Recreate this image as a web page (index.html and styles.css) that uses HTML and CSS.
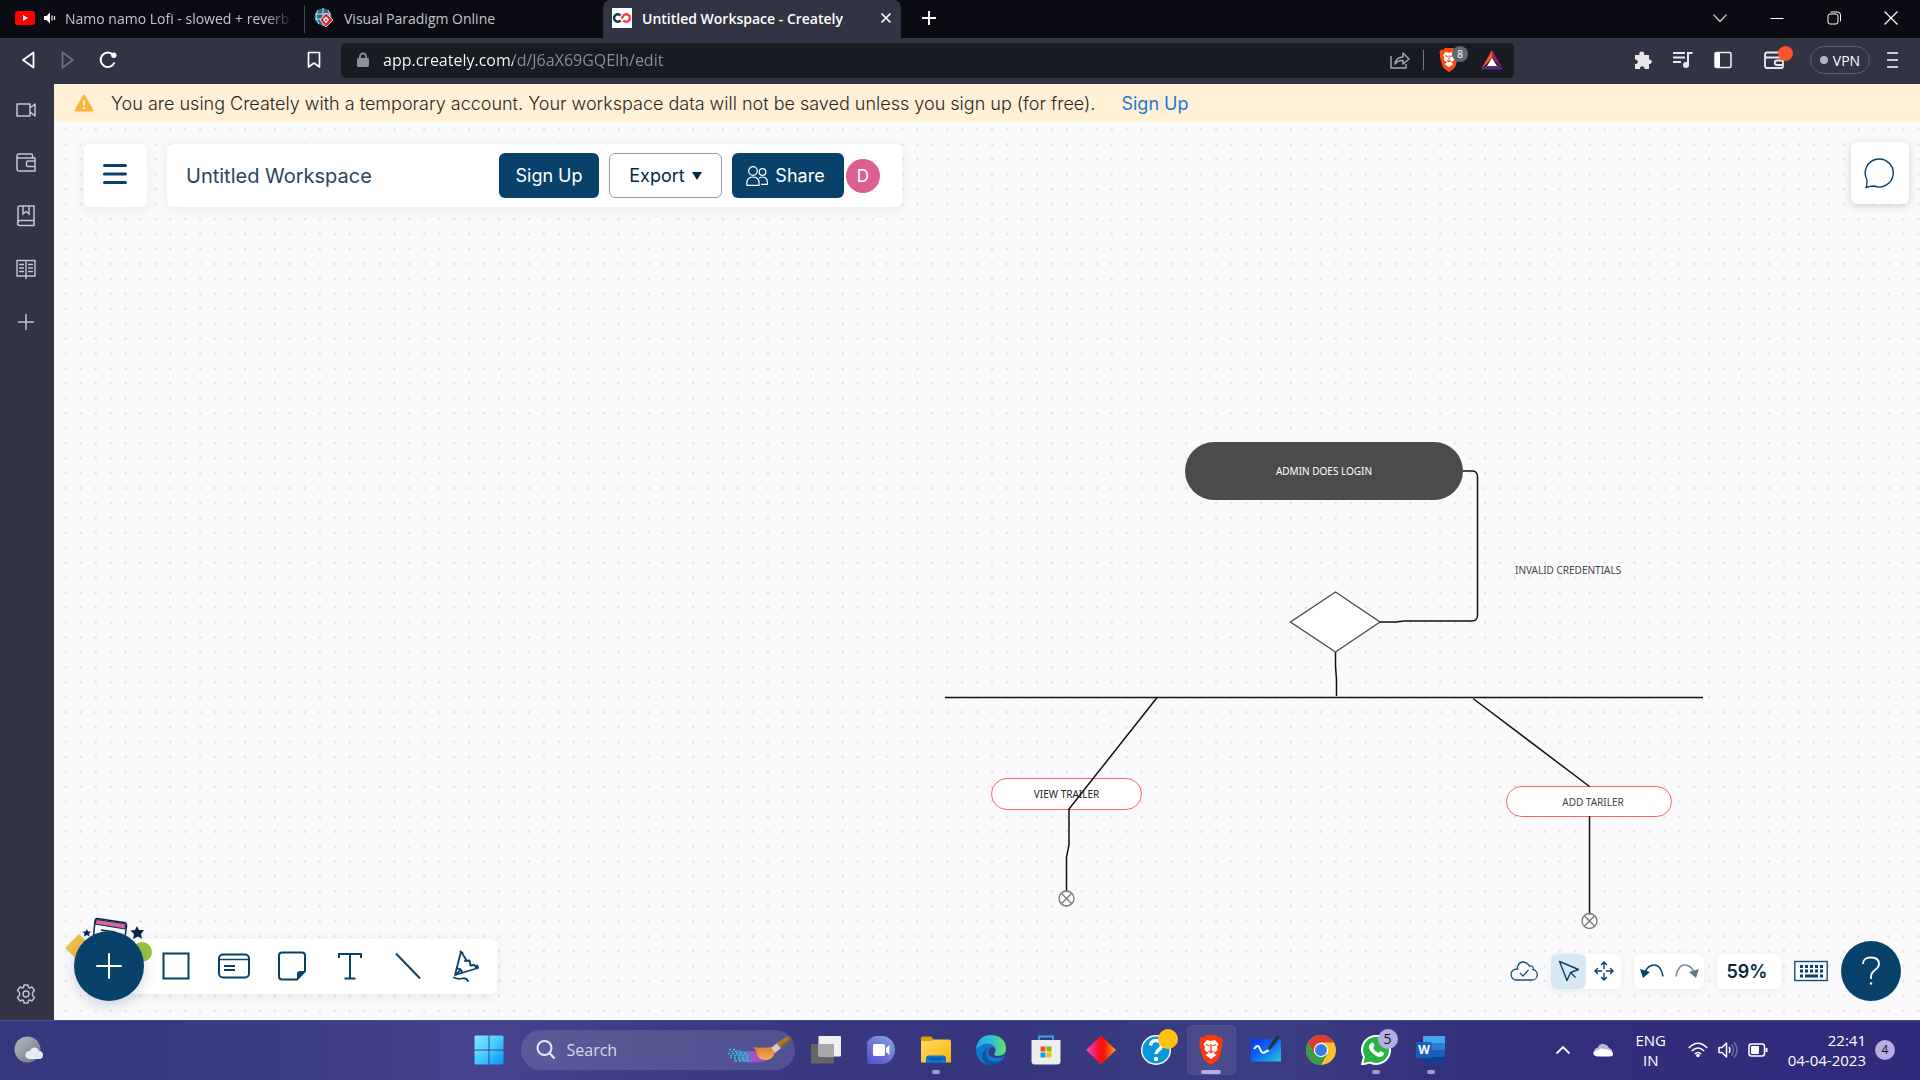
FILE: index.html
```html
<!DOCTYPE html>
<html lang="en">
<head>
<meta charset="utf-8">
<title>Untitled Workspace - Creately</title>
<link rel="stylesheet" href="styles.css">
</head>
<body>
<header class="tabstrip">
  <div class="tab tab-first">
    <svg width="20" height="14" viewBox="0 0 20 14"><rect width="20" height="14" rx="3" fill="#f00"/><path d="M8 4v6l5-3z" fill="#fff"/></svg>
    <svg width="12" height="12" viewBox="0 0 12 12"><path d="M0 4h2.500l3.500-3.500v11L2.500 8H0z" fill="#fff"/><path d="M8 3.500v5M10.500 4v4" stroke="#ddd" stroke-width="1.300" fill="none"/></svg>
    <span class="tab-title tab-fade">Namo namo Lofi - slowed + reverb</span>
  </div>
  <div class="tab tab-second">
    <svg width="20" height="20" viewBox="0 0 20 20"><circle cx="9" cy="9" r="8.500" fill="#2d6f8e"/><path d="M1 6h16M1 11h16M9 0v18M4 2q-4 7 1 14M14 2q4 6 0 13" stroke="#b9dbe8" stroke-width="1" fill="none"/><path d="M12 5l7 7-7 7-6-7z" fill="#d8232f" stroke="#fff" stroke-width=".8"/><path d="M12 8.500l3 3-3 4-3-4z" fill="#fff"/><path d="M12 10.500l1.200 1.500-1.200 1.500-1.200-1.500z" fill="#d8232f"/></svg>
    <span class="tab-title">Visual Paradigm Online</span>
  </div>
  <div class="tab tab-active">
    <svg width="20" height="20" viewBox="0 0 20 20"><rect width="20" height="20" fill="#fff"/><path d="M8.500 7.500A3.700 3.700 0 1 0 8.500 12.500" fill="none" stroke="#12324d" stroke-width="2.400"/><path d="M11.500 12.500A3.700 3.700 0 1 0 11.500 7.500L9.500 10.500" fill="none" stroke="#ef4444" stroke-width="2.400"/></svg>
    <span class="tab-title">Untitled Workspace - Creately</span>
    <button class="icon-btn tab-close" aria-label="Close tab"><svg width="12" height="12" viewBox="0 0 12 12"><path d="M1.500 1.500l9 9M10.500 1.500l-9 9" stroke="#fff" stroke-width="1.700"/></svg></button>
  </div>
  <button class="icon-btn new-tab" aria-label="New tab"><svg width="16" height="16" viewBox="0 0 16 16"><path d="M8 1v14M1 8h14" stroke="#fff" stroke-width="2"/></svg></button>
  <div class="window-controls">
    <button class="icon-btn" aria-label="Search tabs"><svg width="14" height="14" viewBox="0 0 14 14"><path d="M.5 3.500L7 10.500l6.500-7" fill="none" stroke="#ccc" stroke-width="1.200"/></svg></button>
    <button class="icon-btn" aria-label="Minimize"><svg width="14" height="14" viewBox="0 0 14 14"><path d="M.5 7.500h13" stroke="#fff" stroke-width="1"/></svg></button>
    <button class="icon-btn" aria-label="Restore"><svg width="14" height="14" viewBox="0 0 14 14"><rect x="1" y="3" width="10" height="10" rx="2" fill="none" stroke="#fff"/><path d="M3.500 1h7q3 0 3 3v6.500" fill="none" stroke="#fff"/></svg></button>
    <button class="icon-btn" aria-label="Close"><svg width="14" height="14" viewBox="0 0 14 14"><path d="M.5.5l13 13M13.500.5l-13 13" stroke="#fff" stroke-width="1.200"/></svg></button>
  </div>
</header>

<nav class="toolbar">
  <div class="nav-buttons">
    <button class="icon-btn" aria-label="Back"><svg width="14" height="18" viewBox="0 0 14 18"><path d="M12.500 1.500v15L2 9z" fill="none" stroke="#fff" stroke-width="1.800" stroke-linejoin="round"/></svg></button>
    <button class="icon-btn" aria-label="Forward"><svg width="14" height="18" viewBox="0 0 14 18"><path d="M1.500 1.500v15L12 9z" fill="none" stroke="#6c6f7e" stroke-width="1.800" stroke-linejoin="round"/></svg></button>
    <button class="icon-btn" aria-label="Reload"><svg width="18" height="18" viewBox="0 0 18 18"><path d="M15.500 11.500A7.200 7.200 0 1 1 14 3.800" fill="none" stroke="#fff" stroke-width="2"/><circle cx="14.800" cy="4.200" r="2.700" fill="#fff"/></svg></button>
    <button class="icon-btn bookmark" aria-label="Bookmark this page"><svg width="14" height="18" viewBox="0 0 14 18"><path d="M1.500 1.500h11v14.500L7 12l-5.500 4z" fill="none" stroke="#fff" stroke-width="1.700" stroke-linejoin="round"/></svg></button>
  </div>
  <div class="address">
    <svg width="12" height="16" viewBox="0 0 12 16"><rect x="0" y="6" width="12" height="9" rx="1.500" fill="#8e9099"/><path d="M3 7V4.500a3 3 0 0 1 6 0V7" fill="none" stroke="#8e9099" stroke-width="1.800"/></svg>
    <input class="address-input" aria-label="Address" value="app.creately.com/d/J6aX69GQElh/edit">
    <button class="icon-btn share-page" aria-label="Share page"><svg width="20" height="18" viewBox="0 0 20 18"><path d="M1 5v12h15v-4M5 13q1-7 8-7V2l6 6-6 5V9.500q-5-.5-8 3.500z" fill="none" stroke="#a9abb2" stroke-width="1.400" stroke-linejoin="round"/></svg></button>
    <span class="address-rule"></span>
    <button class="icon-btn shield" aria-label="Brave Shields"><svg width="20" height="24" viewBox="0 0 24 30"><path d="M7 0h10l2.500 2.500 2.500-.5 2 4-1 2 .5 3-3.500 12q-.5 1.500-3 3.500l-5 3.500-5-3.500q-2.500-2-3-3.500L.5 11 1 8 0 6l2-4 2.500.5z" fill="#fb4a12"/><path d="M12 6l4-1 3.500 4-1.500 3 .5 3-4 3 3 2-5.500 4-5.500-4 3-2-4-3 .5-3L4.500 9 8 5z" fill="#fff"/><path d="M7 9.500l3.500 1.500M17 9.500L13.500 11M12 9v8M9.500 16l2.500 1.500 2.500-1.500" stroke="#fb4a12" stroke-width="1.300" fill="none"/></svg><span class="shield-count">8</span></button>
    <button class="icon-btn rewards" aria-label="Rewards"><svg width="22" height="20" viewBox="0 0 22 20"><path d="M11 0L0 19.500 11 8z" fill="#fb5a2b"/><path d="M11 0l11 19.500L11 8z" fill="#a01f66"/><path d="M0 19.500h22L16 15H6z" fill="#5b2b82"/><path d="M11 8l5 8H6z" fill="#fff"/></svg></button>
  </div>
  <div class="extensions">
    <button class="icon-btn" aria-label="Extensions"><svg width="20" height="20" viewBox="0 0 20 20"><path d="M2 5h4.500a2.500 2.500 0 1 1 4.500 0H16v4.500a2.300 2.300 0 1 1 0 4.500v5h-4.500a2.300 2.300 0 1 0-4.500 0H2v-5a2.300 2.300 0 1 0 0-4.500z" fill="#e9e9ed"/></svg></button>
    <button class="icon-btn" aria-label="Media control"><svg width="20" height="18" viewBox="0 0 20 18"><path d="M0 2h12M0 6.500h12M0 11h8M15 14V2h4.500" fill="none" stroke="#e9e9ed" stroke-width="2"/><circle cx="13" cy="14" r="3" fill="#e9e9ed"/></svg></button>
    <button class="icon-btn" aria-label="Sidebar"><svg width="18" height="18" viewBox="0 0 18 18"><rect x="1" y="1.500" width="16" height="15" rx="1.500" fill="none" stroke="#e9e9ed" stroke-width="1.600"/><rect x="1" y="1.500" width="5" height="15" fill="#fff"/></svg></button>
    <button class="icon-btn wallet" aria-label="Wallet"><svg width="20" height="18" viewBox="0 0 20 18"><path d="M1 3.500V15q0 2 2 2h14q2 0 2-2V6.500H3q-2 0-2-2.500T3 1.500h13V6M19 9.500h-6a2.200 2.200 0 0 0 0 4.500h6" fill="none" stroke="#e9e9ed" stroke-width="1.800"/></svg><span class="wallet-dot"></span></button>
    <button class="vpn"><span class="vpn-dot"></span>VPN</button>
    <button class="icon-btn" aria-label="Menu"><svg width="12" height="18" viewBox="0 0 12 18"><path d="M0 2h11M0 9h11M0 16h11" stroke="#fff" stroke-width="1.600"/></svg></button>
  </div>
</nav>

<div class="browser-body">
  <aside class="sidebar">
    <button class="icon-btn" aria-label="Talk"><svg width="20" height="20" viewBox="0 0 20 20"><path d="M1 4h13v12H1zM14 8l5-4v12l-5-4" fill="none" stroke="#c3c4d0" stroke-width="1.500" stroke-linejoin="round"/></svg></button>
    <button class="icon-btn" aria-label="Wallet"><svg width="20" height="20" viewBox="0 0 20 20"><path d="M1 3v13q0 2 2 2h16V5H3Q1 5 1 3t2-2h13l1 4M19 8h-7q-1.500 0-1.500 1.500V12q0 1.500 1.500 1.500h7" fill="none" stroke="#c3c4d0" stroke-width="1.500"/></svg></button>
    <button class="icon-btn" aria-label="Bookmarks"><svg width="20" height="22" viewBox="0 0 20 22"><path d="M2 18V3q0-2 2-2h14v14.500H4q-2.500 0-2.500 2.500T4 20.500h14v-5M7 1v8l3-2.500L13 9V1" fill="none" stroke="#c3c4d0" stroke-width="1.500"/></svg></button>
    <button class="icon-btn" aria-label="Reading list"><svg width="20" height="20" viewBox="0 0 20 20"><path d="M1 1.500h18V17H1zM10 1.500V20M3 5.500h5M3 9h5M3 12.500h5M12 5.500h5M12 9h5M12 12.500h5" fill="none" stroke="#c3c4d0" stroke-width="1.400"/></svg></button>
    <button class="icon-btn" aria-label="Add"><svg width="18" height="18" viewBox="0 0 18 18"><path d="M9 1v16M1 9h16" stroke="#c3c4d0" stroke-width="1.500"/></svg></button>
    <button class="icon-btn settings" aria-label="Settings"><svg width="20" height="20" viewBox="0 0 20 20"><path d="M7.500 3.500L8 1h4l.5 2.500 1 .5L16 3l2.500 3.500-2 2v3l2 2L16 17l-2.500-1-1 .5L12 19H8l-.5-2.500-1-.5L4 17l-2.500-3.500 2-2v-3l-2-2L4 3l2.500 1z" fill="none" stroke="#c3c4d0" stroke-width="1.400" stroke-linejoin="round"/><circle cx="10" cy="10" r="3" fill="none" stroke="#c3c4d0" stroke-width="1.400"/></svg></button>
  </aside>

  <main class="page">
    <div class="banner">
      <svg width="20" height="18" viewBox="0 0 20 18"><path d="M10 1.500L18.500 16.500h-17z" fill="#fcb53b" stroke="#fcb53b" stroke-width="2" stroke-linejoin="round"/><path d="M10 6.500v5" stroke="#fff" stroke-width="1.600"/><circle cx="10" cy="14" r="1" fill="#fff"/></svg>
      <span>You are using Creately with a temporary account. Your workspace data will not be saved unless you sign up (for free).</span>
      <a class="banner-link" href="#signup">Sign Up</a>
    </div>

    <section class="workspace">
      <svg class="layer"><defs><pattern id="dots" x="4" y="0" width="14.940" height="14.940" patternUnits="userSpaceOnUse"><circle cx="7.800" cy="7.400" r="1.200" fill="#e1e1e5"/></pattern></defs><rect width="100%" height="100%" fill="url(#dots)"/></svg>

      <div class="node node-admin">ADMIN DOES LOGIN</div>
      <div class="note-invalid">INVALID CREDENTIALS</div>
      <div class="node node-view">VIEW TRAILER</div>
      <div class="node node-add">ADD TARILER</div>
      <svg class="layer">
        <g fill="none" stroke="#111" stroke-width="1.500">
          <path d="M1409 349h9q5 0 5.500 5v140q-.5 5-5.500 5h-68l-8 1h-16"/>
          <path d="M1281.500 530v14l1 14v16"/>
          <path d="M891 575.500h758"/>
          <path d="M1103.500 575L1015 687v36l-2.500 12v34"/>
          <path d="M1419 576.500L1535.500 664.500M1535.500 694v98.500"/>
        </g>
        <path d="M1281.500 470l44.500 30-44.500 30-45-30z" fill="#fff" stroke="#4d4d4d" stroke-width="1.400"/>
        <g fill="none" stroke="#777" stroke-width="1.300">
          <circle cx="1012.500" cy="776.500" r="7.500"/><path d="M1007.500 771.500l10 10M1017.500 771.500l-10 10"/>
          <circle cx="1535.500" cy="799" r="7.500"/><path d="M1530.500 794l10 10M1540.500 794l-10 10"/>
        </g>
      </svg>

      <div class="ui">
        <div class="ui-top">
          <div class="cards">
            <button class="card menu-card" aria-label="Main menu"><svg width="24" height="22" viewBox="0 0 24 22"><path d="M1.500 2.500h21M1.500 11h21M1.500 19.500h21" stroke="#08426a" stroke-width="3" stroke-linecap="round"/></svg></button>
            <div class="card title-card">
              <input class="title-input" aria-label="Workspace name" value="Untitled Workspace">
              <button class="btn btn-solid btn-signup">Sign Up</button>
              <button class="btn btn-outline">Export<svg width="10" height="8" viewBox="0 0 10 8"><path d="M0 0h10L5 8z" fill="#06283f"/></svg></button>
              <button class="btn btn-solid btn-share"><svg width="22" height="20" viewBox="0 0 22 20"><g fill="none" stroke="#fff" stroke-width="1.200"><circle cx="7" cy="5" r="4.300"/><circle cx="16.500" cy="6" r="3.300"/><path d="M1 19.300Q0 11 7 11t6 8.300zM15 18.300h6.300Q22 11 16.500 11q-2 0-3.300 1.200"/></g></svg>Share</button>
              <span class="avatar">D</span>
            </div>
          </div>
          <button class="card chat-card" aria-label="Comments"><svg width="32" height="32" viewBox="0 0 32 32"><path d="M2 30.500q1.500-4 .8-8A14 14 0 1 1 10 29q-4 0-8 1.500z" fill="none" stroke="#08426a" stroke-width="1.400" stroke-linejoin="round"/></svg></button>
        </div>

        <div class="ui-bottom">
          <div class="dock">
            <svg class="dock-art" width="92" height="52" viewBox="0 0 92 52"><path d="M1 31l14-14 14 14-14 14z" fill="#f0bd4c"/><circle cx="78" cy="35" r="10" fill="#93c63d"/><path d="M33 1.500l27 4q3 1 2.500 4L58 40 28 35l3-31q.5-2.500 2-2.500z" fill="#fff" stroke="#062b43" stroke-width="1.500"/><path d="M32.500 2.500l27 4q2 .5 2 2.500l-.5 3L31 7z" fill="#dd63a4" stroke="#062b43"/><path d="M37 13l14 2" stroke="#062b43" stroke-width="1.500"/><path d="M73 9l2 4 5 0-3 4 1 5-4-2.500L69 22l1-5-3.500-3.500 4.500-.5zM23 12l1 2.500h3l-2 2 .5 3-2.500-1.500-3 1.500.5-3-2-2h3z" fill="#062b43"/></svg>
            <button class="dock-add" aria-label="Add"><svg width="26" height="26" viewBox="0 0 26 26"><path d="M13 1v24M1 13h24" stroke="#fff" stroke-width="2" stroke-linecap="round"/></svg></button>
            <div class="dock-tools">
              <button class="icon-btn" aria-label="Shape"><svg width="28" height="28" viewBox="0 0 28 28"><rect x="1.500" y="1.500" width="25" height="25" fill="none" stroke="#08426a" stroke-width="2"/></svg></button>
              <button class="icon-btn" aria-label="Card"><svg width="32" height="26" viewBox="0 0 32 26"><rect x="1" y="1.500" width="30" height="23" rx="4" fill="none" stroke="#08426a" stroke-width="2"/><path d="M1 6.500h30" stroke="#08426a" stroke-width="1.500"/><path d="M6 13h11M6 17h11" stroke="#08426a" stroke-width="2"/></svg></button>
              <button class="icon-btn" aria-label="Sticky note"><svg width="28" height="30" viewBox="0 0 28 30"><path d="M4 1.500h20q3 0 3 3V20l-8 8.500H4q-3 0-3-3v-21q0-3 3-3z" fill="none" stroke="#08426a" stroke-width="2"/><path d="M27 20l-8 8.500V23q0-3 3-3z" fill="#08426a"/></svg></button>
              <button class="icon-btn" aria-label="Text"><svg width="24" height="28" viewBox="0 0 24 28"><path d="M1 6V2h22v4M12 2v24M6.500 26.500h11" fill="none" stroke="#08426a" stroke-width="2"/></svg></button>
              <button class="icon-btn" aria-label="Line"><svg width="26" height="28" viewBox="0 0 26 28"><path d="M1 1.500L25 26.500" stroke="#08426a" stroke-width="2"/></svg></button>
              <button class="icon-btn" aria-label="Draw"><svg width="26" height="32" viewBox="0 0 26 32"><g fill="none" stroke="#08426a" stroke-width="1.800" stroke-linejoin="round" stroke-linecap="round"><path d="M8 1.500L2 25l23-7M7.500 1.500L9.500 3M9 3l4 6.500-1 1.500 4.500-.5 1 5 4-.5 1.500 2.500M25 17.500l-1-2"/><path d="M4 18.500q5 .5 5 4M3 24.500l3.500-3.500"/><path d="M1 27.500q4 2 8 1t6 2.500"/></g></svg></button>
            </div>
          </div>

          <div class="controls">
            <svg width="28" height="20" viewBox="0 0 28 20"><path d="M6 19h16a5.300 5.300 0 0 0 1-10.500Q24 4.500 19.500 5 17 1 13 1T7.500 6q-.5 1 0 2Q1 8 1 13.500 1.500 18.500 6 19z" fill="none" stroke="#1d4d70" stroke-width="1.300"/><path d="M10 12l3 3 5.500-6" fill="none" stroke="#1d4d70" stroke-width="1.300"/></svg>
            <div class="pair">
              <button class="icon-btn selected" aria-label="Select"><svg width="22" height="22" viewBox="0 0 22 22"><path d="M1.500 1.500l19 8-8 3-3.500 8zM12.500 12.500l5 5" fill="none" stroke="#08426a" stroke-width="1.400" stroke-linejoin="round"/></svg></button>
              <button class="icon-btn" aria-label="Pan"><svg width="20" height="20" viewBox="0 0 20 20"><path d="M10 8V1M7 4l3-3 3 3M10 12v7M7 16l3 3 3-3M8 10H1M4 7l-3 3 3 3M12 10h7M16 7l3 3-3 3" fill="none" stroke="#08426a" stroke-width="1.400"/></svg></button>
            </div>
            <div class="pair">
              <button class="icon-btn" aria-label="Undo"><svg width="24" height="16" viewBox="0 0 24 16"><path d="M5 9Q8 2 14.500 2T23 13.500" fill="none" stroke="#08426a" stroke-width="1.500"/><path d="M0 6l10 3-7 6z" fill="#08426a"/></svg></button>
              <button class="icon-btn" aria-label="Redo"><svg width="24" height="16" viewBox="0 0 24 16"><path d="M19 9Q16 2 9.500 2T1 13.500" fill="none" stroke="#728a94" stroke-width="1.500"/><path d="M24 6L14 9l7 6z" fill="#5f7a85"/></svg></button>
            </div>
            <button class="zoom">59%</button>
            <button class="icon-btn" aria-label="Keyboard shortcuts"><svg width="34" height="22" viewBox="0 0 34 22"><rect x=".8" y="1.500" width="32.400" height="19" fill="none" stroke="#1d4d70" stroke-width="1.400"/><path d="M6 6.500h23M6 11h23" stroke="#08426a" stroke-width="3" stroke-dasharray="3 2"/><path d="M6 16h3M11 16h13M26 16h3" stroke="#08426a" stroke-width="3"/></svg></button>
            <button class="help" aria-label="Help"><svg width="20" height="30" viewBox="0 0 20 30"><path d="M2 8q0-6.500 8-6.500t8 6.500q0 3-4 6t-4 7v2" fill="none" stroke="#fff" stroke-width="1.800"/><circle cx="10" cy="27.500" r="1.200" fill="#fff"/></svg></button>
          </div>
        </div>
      </div>
    </section>
  </main>
</div>

<footer class="taskbar">
  <button class="icon-btn weather" aria-label="Weather"><svg width="30" height="30" viewBox="0 0 30 30"><defs><linearGradient id="moon" x2="1" y2="1"><stop stop-color="#b5bcc4"/><stop offset="1" stop-color="#6d747b"/></linearGradient></defs><circle cx="13.500" cy="14.500" r="13" fill="url(#moon)"/><path d="M15 24h10a4 4 0 0 0 0-8q-1-3.500-4.500-3.500T16 16a4 4 0 0 0-1 8z" fill="#e8ecf1"/></svg></button>
  <div class="apps">
    <button class="app" aria-label="Start"><svg width="30" height="30" viewBox="0 0 30 30"><defs><linearGradient id="win" x2="1" y2="1"><stop stop-color="#8be4ff"/><stop offset=".5" stop-color="#45cbff"/><stop offset="1" stop-color="#0594fb"/></linearGradient></defs><path d="M1.500.5H14.500v14H.5v-13zM15.500.5H28.500l1 1v13h-14zM.5 15.500h14v14h-13l-1-1zM15.500 15.500h14v13l-1 1h-13z" fill="url(#win)"/></svg></button>
    <label class="search">
      <svg width="20" height="20" viewBox="0 0 20 20"><circle cx="8.500" cy="8" r="7" fill="none" stroke="#e8e8f4" stroke-width="2"/><path d="M13.500 13l5 5.500" stroke="#e8e8f4" stroke-width="2.200"/></svg>
      <input class="search-input" aria-label="Search" placeholder="Search">
      <svg width="64" height="30" viewBox="0 0 64 30"><defs><linearGradient id="paint"><stop stop-color="#29b7c9" stop-opacity=".3"/><stop offset=".4" stop-color="#647ccf"/><stop offset=".65" stop-color="#c04bd8"/><stop offset="1" stop-color="#b048b8"/></linearGradient><linearGradient id="bristle" y2="1" x2="0"><stop stop-color="#d9822d"/><stop offset="1" stop-color="#f2ac5a"/></linearGradient></defs><path d="M4 14q10 3 24 2l12 10q-14 3-28 0z" fill="url(#paint)" opacity=".85"/><path d="M1 14.500h7M0 18.500h18M2 22.500h18M7 26h14" stroke="#35c4d2" stroke-width="1.600" stroke-dasharray="2 2"/><path d="M3 16.500h12M2 20.500h18M6 24.500h16" stroke="#35b4d2" stroke-width="1.600" stroke-dasharray="2 2"/><path d="M25 12q10 1 18 0l4 5q-2 8-9 8-8 0-9-6-1-5-4-7z" fill="url(#bristle)"/><path d="M43 13l6-5 4 5-6 5z" fill="#d8c8bf"/><path d="M48 8L60 1q3 1 3 4L53 13z" fill="#a67a34"/><path d="M60 2l2 3-10 7" stroke="#6e4b1b" fill="none"/></svg>
    </label>
    <button class="app" aria-label="Task view"><svg width="30" height="28" viewBox="0 0 30 28"><rect x="0" y="8" width="23" height="19.500" rx="1" fill="#656565"/><rect x="7.500" y="0" width="22.500" height="20.500" rx="1" fill="#f1f1f1"/><path d="M7.500 8H23v12.500H7.500z" fill="#a9a9ab"/></svg></button>
    <button class="app" aria-label="Chat"><svg width="28" height="28" viewBox="0 0 28 28"><defs><linearGradient id="chat" x1="0" x2=".8" y1="1" y2="0"><stop stop-color="#4b4ed0"/><stop offset=".6" stop-color="#7678d2"/><stop offset="1" stop-color="#7aa2e6"/></linearGradient></defs><path d="M14.500 0a13.500 14 0 1 1 0 28H.5V22A14 14 0 0 1 14.500 0z" fill="url(#chat)"/><rect x="6" y="8" width="12" height="12" rx="1.500" fill="#fff"/><path d="M19 12l3.500-3v10L19 16z" fill="#fff"/></svg></button>
    <button class="app running" aria-label="File Explorer"><svg width="30" height="28" viewBox="0 0 30 28"><defs><linearGradient id="fold" x2="1" y2="1"><stop stop-color="#ffdb62"/><stop offset="1" stop-color="#fbb40c"/></linearGradient></defs><path d="M0 2q0-1.500 1.500-1.500H10L13 4v4H0z" fill="#e09e00"/><path d="M0 5h10l3-1.500h15q2 0 2 2V26.500H0z" fill="url(#fold)"/><path d="M5 27v-4.500q0-3 3-3h14q3 0 3 3V27z" fill="#0a73c9"/><path d="M8.500 23h13" stroke="#0b4478" stroke-width="1"/></svg></button>
    <button class="app" aria-label="Microsoft Edge"><svg width="30" height="30" viewBox="0 0 30 30"><defs><linearGradient id="edgeTop" x2="1"><stop stop-color="#27a8e4"/><stop offset=".6" stop-color="#35c3c9"/><stop offset="1" stop-color="#6ee355"/></linearGradient></defs><circle cx="15" cy="15" r="15" fill="#0f79d2"/><path d="M0 14Q2 0 15.500 0 29 1 30 13q0 7-8 8-4 0-4-2 3-4 0-8-7-6-18 3z" fill="url(#edgeTop)"/><path d="M12 13q-4 5 0 11 6 6 15 0-4 6-12 6-8-1-9-8-.5-6 6-9z" fill="#0c559c"/><path d="M13 14q-2 3 .5 6.500 5 4 13.500 1.500l2-3q-3 2-7 2-4 0-4-2 2.500-3 .5-6.500-3-1.500-5.500 1.500z" fill="#373880"/></svg></button>
    <button class="app" aria-label="Microsoft Store"><svg width="30" height="30" viewBox="0 0 30 30"><path d="M8 6V1.500h14V6" fill="none" stroke="#2ca9e6" stroke-width="1.800"/><path d="M.5 5h29v21q0 3.500-3.500 3.500H4Q.5 29.500.5 26z" fill="#eee"/><path d="M9.500 11.500h5v5h-5z" fill="#f25022"/><path d="M15.500 11.500h5v5h-5z" fill="#7fba00"/><path d="M9.500 17.500h5v5h-5z" fill="#00a4ef"/><path d="M15.500 17.500h5v5h-5z" fill="#ffb900"/></svg></button>
    <button class="app" aria-label="Diamond app"><svg width="30" height="30" viewBox="0 0 30 30"><defs><linearGradient id="dia"><stop stop-color="#f346cc"/><stop offset=".45" stop-color="#f51022"/><stop offset=".6" stop-color="#f51500"/><stop offset="1" stop-color="#fba51c"/></linearGradient></defs><path d="M15 0.500L30 15 15 29.500 0 15z" fill="url(#dia)"/></svg></button>
    <button class="app" aria-label="Get Help"><svg width="30" height="30" viewBox="0 0 30 30"><circle cx="15" cy="15" r="14.300" fill="#0a97d9" stroke="#fff" stroke-width="1.400"/><path d="M9.500 10.500q.5-5 5.500-5t5.500 4.500q0 3-3 5-2.500 2-2.500 4" fill="none" stroke="#fff" stroke-width="3.500"/><circle cx="15" cy="24" r="2.200" fill="#fff"/></svg><span class="badge badge-yellow"></span></button>
    <button class="app running active" aria-label="Brave"><svg width="26" height="30" viewBox="0 0 24 30"><path d="M7 0h10l2.500 2.500 2.500-.5 2 4-1 2 .5 3-3.500 12q-.5 1.500-3 3.500l-5 3.500-5-3.500q-2.500-2-3-3.500L.5 11 1 8 0 6l2-4 2.500.5z" fill="#fb3a0c"/><path d="M12 6l4-1 3.500 4-1.500 3 .5 3-4 3 3 2-5.500 4-5.500-4 3-2-4-3 .5-3L4.500 9 8 5z" fill="#fff"/><path d="M7 9.500l3.500 1.500M17 9.500L13.500 11M12 9v8M9.500 16l2.500 1.500 2.500-1.500" stroke="#fb3a0c" stroke-width="1.300" fill="none"/></svg></button>
    <button class="app" aria-label="Whiteboard"><svg width="30" height="30" viewBox="0 0 30 30"><defs><linearGradient id="wb" x2="1" y2="1"><stop stop-color="#0637f0"/><stop offset=".45" stop-color="#0a62fa"/><stop offset="1" stop-color="#27cbd9"/></linearGradient></defs><rect y="4" width="30" height="22.500" rx="1" fill="url(#wb)"/><path d="M3 14q4-6 6 0t6 2.500l3-1.500" fill="none" stroke="#fff" stroke-width="2"/><path d="M18 11L26 0l3 2.500L21 13l-4 2.500z" fill="#2c3038"/></svg></button>
    <button class="app" aria-label="Google Chrome"><svg width="30" height="30" viewBox="0 0 30 30"><circle cx="15" cy="15" r="15" fill="#fbc02d"/><path d="M2 7.500A15 15 0 0 1 28 7.500H15L8.500 19z" fill="#d93f30"/><path d="M2 7.500A15 15 0 0 0 15 30l6.500-11.500H8.500z" fill="#3b9a45"/><circle cx="15" cy="15" r="7.200" fill="#fff"/><circle cx="15" cy="15" r="6" fill="#357ee8"/></svg></button>
    <button class="app running" aria-label="WhatsApp"><svg width="30" height="30" viewBox="0 0 30 30"><path d="M1 29.500L3 22A14 14 0 1 1 9 27.500z" fill="#27b443" stroke="#fff" stroke-width="2"/><path d="M9 9q3-3 4 0l.5 2-1.500 2q2 3.500 5.500 5l2-2 3.500 2q0 3.500-4 4-3.500 0-7.500-4T8 12q0-2 1-3z" fill="#fff"/></svg><span class="badge badge-lilac">5</span></button>
    <button class="app running" aria-label="Word"><svg width="30" height="28" viewBox="0 0 30 28"><path d="M7 0h22v7H7z" fill="#41a5ee"/><path d="M7 7h22v7H7z" fill="#2b7cd3"/><path d="M7 14h22v7H7z" fill="#185abd"/><path d="M7 21h22v6.500H7z" fill="#103f91"/><rect y="6" width="15.500" height="16" rx="1" fill="#1a5dbe"/><text x="8" y="18" text-anchor="middle" class="word-letter">W</text></svg></button>
  </div>
  <div class="tray">
    <button class="icon-btn" aria-label="Hidden icons"><svg width="16" height="10" viewBox="0 0 16 10"><path d="M1.500 8.500L8 2l6.500 6.500" fill="none" stroke="#fff" stroke-width="1.800"/></svg></button>
    <button class="icon-btn" aria-label="OneDrive"><svg width="22" height="14" viewBox="0 0 22 14"><path d="M2 9q0-4 4-4.500Q8 0 12 1t5 4q4 1 3 5z" fill="#b9b7dc"/><path d="M5 13.500h13q3 0 3-2.500t-4-4L9 5.500 1.500 9q-1 3.500 3.500 4.500z" fill="#fff"/></svg></button>
    <button class="tray-text lang">ENG<br>IN</button>
    <div class="status">
      <svg width="20" height="16" viewBox="0 0 20 16"><g fill="none" stroke="#fff" stroke-width="1.500"><path d="M.8 6Q10-3.500 19.200 6M3.800 9q6.200-6 12.400 0M6.800 12q3.200-3 6.400 0"/></g><circle cx="10" cy="13.500" r="1.800" fill="#fff"/></svg>
      <svg width="20" height="18" viewBox="0 0 20 18"><path d="M1 6.500h3L8.500 2v14L4 11.500H1z" fill="none" stroke="#fff" stroke-width="1.500" stroke-linejoin="round"/><path d="M11 6q2 3 0 6" fill="none" stroke="#fff" stroke-width="1.400"/><path d="M13.500 3.500q4 5.500 0 11M16 1q6 8 0 16" fill="none" stroke="#7772b0" stroke-width="1.300"/></svg>
      <svg width="20" height="14" viewBox="0 0 20 14"><rect x="1" y="1" width="15.500" height="12" rx="2.500" fill="none" stroke="#fff" stroke-width="1.500"/><rect x="3" y="3" width="8" height="8" rx="1" fill="#fff"/><path d="M18.500 5v4" stroke="#fff" stroke-width="2"/></svg>
    </div>
    <button class="tray-text clock">22:41<br>04-04-2023</button>
    <span class="count">4</span>
  </div>
</footer>
</body>
</html>
```
FILE: styles.css
```css
* { box-sizing: border-box; }

body {
  margin: 0;
  height: 100vh;
  display: flex;
  flex-direction: column;
  overflow: hidden;
  font-family: "Open Sans", "Noto Sans", sans-serif;
  background: #323443;
}

button, input { font: inherit; color: inherit; }
button { border: 0; background: none; padding: 0; cursor: pointer; }
input { border: 0; background: none; padding: 0; outline: 0; min-width: 0; }
svg { flex: none; display: block; }

.icon-btn {
  display: flex;
  align-items: center;
  justify-content: center;
  position: relative;
}

/* Browser tabs */
.tabstrip {
  display: flex;
  flex: none;
  height: 38px;
  background: #0b0b14;
  color: #c4c4cb;
  font-size: 14px;
}
.tab {
  display: flex;
  align-items: center;
  gap: 10px;
  width: 298px;
  padding: 0 9px 2px;
}
.tab-first {
  width: 305px;
  padding-left: 15px;
  gap: 9px;
  background: linear-gradient(#45454d, #45454d) right center / 1px 28px no-repeat;
}
.tab-title { white-space: nowrap; overflow: hidden; }
.tab-fade {
  width: 228px;
  -webkit-mask-image: linear-gradient(90deg, #000 88%, transparent);
  mask-image: linear-gradient(90deg, #000 88%, transparent);
}
.tab-active {
  background: #323443;
  border-radius: 8px 8px 0 0;
  color: #fff;
  font-weight: 600;
}
.tab-close { margin-left: auto; }
.new-tab { width: 56px; padding-bottom: 2px; }
.window-controls { display: flex; margin-left: auto; padding: 0 1px 2px 0; }
.window-controls .icon-btn { width: 57px; }

/* Address row */
.toolbar {
  display: flex;
  flex: none;
  align-items: center;
  height: 46px;
  padding-bottom: 2px;
  background: #323443;
}
.nav-buttons { display: flex; width: 341px; padding: 0 7px 0 8px; }
.nav-buttons .icon-btn { width: 40px; }
.nav-buttons .bookmark { margin-left: auto; }
.address {
  display: flex;
  align-items: center;
  flex: 1;
  height: 35px;
  padding: 0 11px 0 16px;
  border-radius: 5px;
  background: #191b22;
}
.address-input {
  flex: 1;
  margin-left: 14px;
  font-size: 16px;
  color: transparent;
  background: linear-gradient(90deg, #fff 130px, #8d8f97 130px);
  -webkit-background-clip: text;
  background-clip: text;
}
.address-rule { width: 1px; height: 20px; margin: 0 15px 0 13px; background: #777980; }
.shield-count {
  position: absolute;
  left: 13px;
  top: -2px;
  width: 16px;
  height: 16px;
  border-radius: 8px;
  background: #636673;
  color: #fff;
  font-size: 10px;
  line-height: 16px;
}
.rewards { margin-left: 22px; }
.extensions { display: flex; align-items: center; width: 406px; padding-right: 7px; justify-content: flex-end; }
.extensions .icon-btn { width: 40px; height: 30px; }
.extensions .wallet { margin: 0 16px 0 11px; }
.wallet-dot {
  position: absolute;
  left: 24px;
  top: 1px;
  width: 15px;
  height: 15px;
  border-radius: 50%;
  background: #fb542b;
}
.vpn {
  display: flex;
  align-items: center;
  justify-content: center;
  gap: 5px;
  width: 60px;
  height: 28px;
  margin-right: 3px;
  border: 1px solid #5c5e70;
  border-radius: 14px;
  color: #fff;
  font-size: 14px;
}
.vpn-dot { width: 8px; height: 8px; border-radius: 50%; background: #b0b2c4; }

/* Browser side panel */
.browser-body { display: flex; flex: 1; min-height: 0; }
.sidebar {
  display: flex;
  flex-direction: column;
  flex: none;
  width: 54px;
  padding: 8px 2px 8px 0;
  background: #323443;
}
.sidebar .icon-btn { height: 36px; margin-bottom: 17px; }
.sidebar .settings { margin: auto 0 0; }

/* Creately page */
.page {
  display: flex;
  flex-direction: column;
  flex: 1;
  min-width: 0;
  font-family: Inter, "Liberation Sans", sans-serif;
}
.banner {
  display: flex;
  align-items: center;
  flex: none;
  gap: 17px;
  height: 38px;
  padding-left: 20px;
  background: #fff0d6;
  color: #2a2722;
  font-size: 18px;
  font-weight: 300;
}
.banner-link { margin-left: 9px; color: #1b7ad1; font-weight: 400; text-decoration: none; }
.workspace { position: relative; flex: 1; overflow: hidden; background: #fafafc; }
.layer { position: absolute; left: 0; top: 0; width: 100%; height: 100%; }

/* Diagram */
.node, .note-invalid {
  position: absolute;
  display: flex;
  align-items: center;
  justify-content: center;
  font-family: "Noto Sans", "Open Sans", sans-serif;
  font-size: 10px;
  white-space: nowrap;
}
.node-admin { left: 1131px; top: 320px; width: 278px; height: 58px; border-radius: 29px; background: #4b4b4b; color: #fff; }
.note-invalid { left: 1461px; top: 440px; height: 16px; color: #444; }
.node-view { left: 937px; top: 656px; width: 151px; height: 32px; border: 1px solid #fa6464; border-radius: 16px; background: #fff; color: #222; }
.node-add { left: 1452px; top: 664px; width: 166px; height: 31px; padding-left: 8px; border: 1px solid #fa6464; border-radius: 16px; background: #fff; color: #444; }

/* Floating controls */
.ui {
  position: relative;
  display: flex;
  flex-direction: column;
  justify-content: space-between;
  height: 100%;
  padding: 20px 11px 19px 30px;
}
.ui-top, .ui-bottom { display: flex; justify-content: space-between; }
.ui-top { align-items: flex-start; }
.cards { display: flex; gap: 20px; padding-top: 2px; }
.card {
  display: flex;
  align-items: center;
  justify-content: center;
  height: 63px;
  border-radius: 6px;
  background: #fff;
  box-shadow: 0 2px 12px rgba(40, 50, 80, .09);
}
.menu-card { width: 63px; padding: 0 2px 3px 0; }
.title-card { width: 735px; gap: 10px; padding: 0 22px 0 19px; }
.title-input { flex: 1; color: #27455b; font-size: 20px; }
.btn {
  display: flex;
  align-items: center;
  justify-content: center;
  gap: 7px;
  height: 45px;
  border-radius: 6px;
  font-size: 18px;
}
.btn-solid { background: #08426a; color: #fff; }
.btn-outline { width: 113px; border: 1px solid #8fa0ab; color: #06283f; }
.btn-signup { width: 100px; }
.btn-share { width: 112px; padding-right: 5px; }
.avatar {
  width: 34px;
  height: 34px;
  margin-left: -8px;
  border-radius: 50%;
  background: #dc5f92;
  color: #fff;
  font-size: 17px;
  line-height: 34px;
  text-align: center;
}
.chat-card { width: 58px; height: 62px; box-shadow: 0 2px 8px rgba(40, 50, 80, .2); }

.ui-bottom { align-items: flex-end; margin-right: 8px; margin-left: -10px; }
.dock { position: relative; display: flex; align-items: center; }
.dock-art { position: absolute; left: -10px; top: -14px; z-index: 1; }
.dock-add {
  position: relative;
  z-index: 2;
  display: flex;
  align-items: center;
  justify-content: center;
  width: 70px;
  height: 70px;
  border-radius: 50%;
  background: #08426a;
  box-shadow: 0 4px 14px rgba(40, 50, 80, .2);
}
.dock-tools {
  display: flex;
  height: 55px;
  margin-left: -35px;
  padding: 0 2px 0 38px;
  border-radius: 6px;
  background: #fff;
  box-shadow: 0 2px 12px rgba(40, 50, 80, .09);
}
.dock-tools .icon-btn { width: 58px; }
.controls { display: flex; align-items: center; gap: 13px; }
.pair, .zoom {
  display: flex;
  height: 35px;
  border-radius: 6px;
  background: #fff;
  box-shadow: 0 2px 8px rgba(40, 50, 80, .07);
}
.pair .icon-btn { width: 35px; border-radius: 6px; }
.pair .selected { background: #d6e8f4; }
.zoom {
  align-items: center;
  justify-content: center;
  width: 64px;
  padding-right: 4px;
  color: #06283f;
  font-size: 18px;
  font-weight: 600;
}
.help {
  display: flex;
  align-items: center;
  justify-content: center;
  width: 60px;
  height: 60px;
  border-radius: 50%;
  background: #08426a;
}

/* Windows taskbar */
.taskbar {
  display: grid;
  grid-template-columns: 1fr auto 1fr;
  align-items: center;
  flex: none;
  height: 60px;
  padding-bottom: 1px;
  border-top: 1px solid #4d4c8c;
  background: linear-gradient(90deg, #35387f 0%, #383b81 12%, #45438d 25%, #393a82 38%, #35367e 52%, #3c3e83 66%, #33307c 76%, #2f2a7a 100%);
  color: #fff;
}
.weather { justify-self: start; margin-left: 14px; }
.apps { display: flex; align-items: center; }
.app {
  position: relative;
  display: flex;
  align-items: center;
  justify-content: center;
  width: 55px;
  height: 50px;
}
.running::after {
  content: "";
  position: absolute;
  left: 23px;
  bottom: 1px;
  width: 8px;
  height: 4px;
  border-radius: 2px;
  background: #a09dc8;
}
.active { width: 49px; margin: 0 3px; border-radius: 5px; background: rgba(255, 255, 255, .08); box-shadow: inset 0 0 0 1px rgba(255, 255, 255, .04); }
.active::after { left: 14px; width: 20px; background: #b6ace6; }
.badge {
  position: absolute;
  left: 29px;
  top: 4px;
  width: 20px;
  height: 20px;
  border-radius: 50%;
  color: #111;
  font-size: 14px;
  line-height: 20px;
}
.badge-yellow { background: #ffc20e; }
.badge-lilac { background: #b6ace6; }
.word-letter { fill: #fff; font: bold 12px "Open Sans", sans-serif; }
.search {
  display: flex;
  align-items: center;
  width: 274px;
  height: 40px;
  margin: 0 4px;
  padding: 0 3px 0 15px;
  border-radius: 20px;
  background: rgba(255, 255, 255, .13);
}
.search-input { flex: 1; margin-left: 11px; font-size: 16px; }
.search-input::placeholder { color: #d9d8ea; opacity: 1; }
.tray { display: flex; align-items: center; justify-content: flex-end; padding-right: 25px; }
.tray .icon-btn { width: 40px; }
.tray-text { font-size: 15px; line-height: 20px; }
.lang { width: 56px; }
.status { display: flex; align-items: center; gap: 10px; margin: 0 20px 0 9px; }
.clock { text-align: right; }
.count {
  width: 20px;
  height: 20px;
  margin-left: 9px;
  border-radius: 50%;
  background: #b6ace6;
  color: #111;
  font-size: 12px;
  line-height: 20px;
  text-align: center;
}
```
